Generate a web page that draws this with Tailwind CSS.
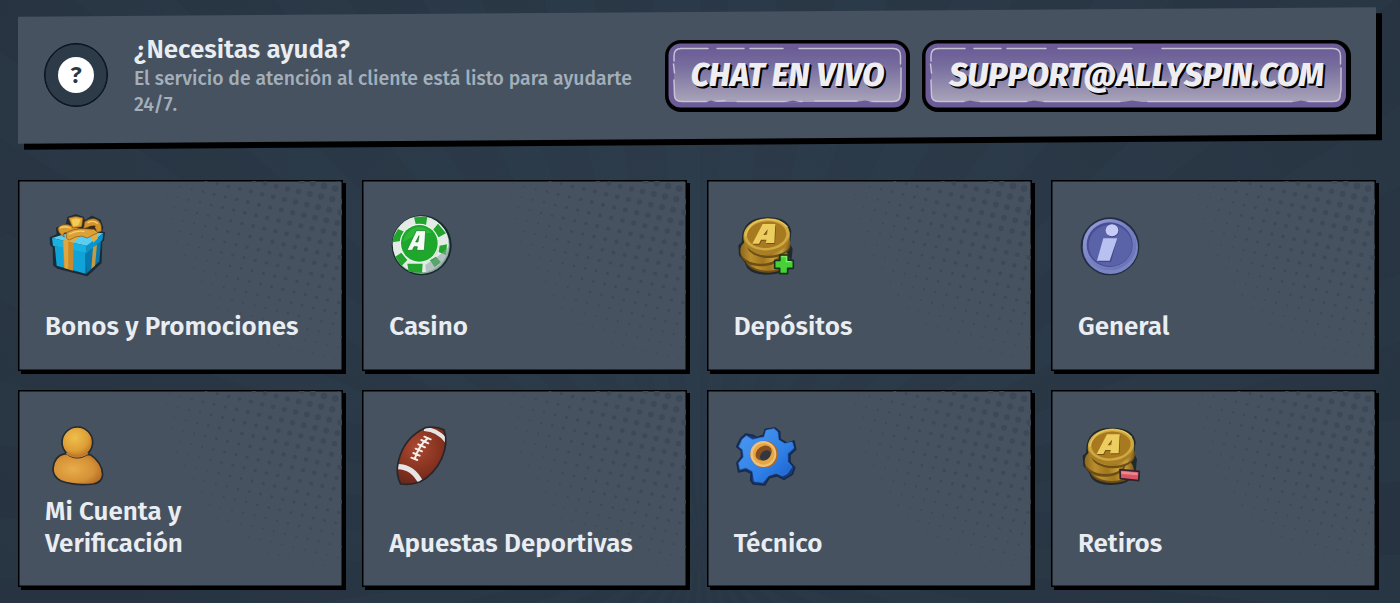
<!DOCTYPE html>
<html lang="es">
<head>
<meta charset="utf-8">
<title>Centro de ayuda</title>
<script src="https://cdn.jsdelivr.net/npm/@tailwindcss/browser@4"></script>
</head>
<body class="h-[603px] overflow-hidden bg-[#293544] font-['Fira_Sans','Noto_Sans',sans-serif] text-[#e9edf2]">
<div class="relative isolate h-[603px] overflow-hidden">
  <!-- faint sunburst -->
  <div class="absolute inset-0 -z-10 bg-[radial-gradient(ellipse_60%_90%_at_50%_40%,#2c3b4a,#273341)]"></div>
  <div class="absolute inset-0 -z-10 bg-[repeating-conic-gradient(from_3deg_at_50%_90%,rgba(60,85,105,0.07)_0deg_5deg,transparent_5deg_11deg)]"></div>

  <header class="relative isolate mx-[18px] mt-3 mr-6 flex h-[127px] items-start">
    <div class="absolute inset-0 -z-10 skew-y-[-0.4deg] bg-[#46525f] shadow-[6px_6px_0_#000]"></div>
    <div class="mt-[31px] ml-[26px] flex size-16 shrink-0 items-center justify-center rounded-full border border-[#06111b] bg-[#2d3a48] shadow-[inset_0_0_0_0.5px_#06111b]">
      <div class="flex size-9 items-center justify-center rounded-full bg-white text-[24px] leading-none font-semibold text-[#2b3846]">?</div>
    </div>
    <div class="mt-[22px] ml-[26px] w-[531px]">
      <h1 class="text-[26px] leading-8 font-semibold whitespace-nowrap">¿Necesitas ayuda?</h1>
      <p class="text-[19.4px] leading-[26px] font-medium whitespace-nowrap text-[#a3afbb]">El servicio de atención al cliente está listo para ayudarte<br>24/7.</p>
    </div>
    <div class="mt-[28px] flex gap-[12px]">
      <a class="relative isolate flex h-[72px] w-[245px] items-center justify-center rounded-[16px] bg-black">
        <svg class="absolute inset-0 -z-10" width="245" height="72" viewBox="0 0 245 72">
          <defs><linearGradient id="bg" x1="0" y1="0" x2="0" y2="1"><stop offset="0" stop-color="#6b5c96"/><stop offset=".3" stop-color="#766b9d"/><stop offset="1" stop-color="#a9a4b9"/></linearGradient></defs>
          <rect x="3.5" y="3.500" width="237.500" height="64" rx="12" fill="#6b5c98"/>
          <rect x="9" y="8.500" width="227" height="53.500" rx="6" fill="url(#bg)"/>
          <g fill="none" stroke="#c6c1d3" stroke-width="1.5" stroke-linecap="round">
            <path d="M16 8.600H43M52 8.600H79M85 8.600H118M134 8.600H228Q235.500 8.600 235.500 16V24M236 28V50L235 55Q235 61.500 228 61.500H205"/>
            <path d="M192 61H150M137 61.500H72M60 60.500L48 61.500M42 61.500H17Q9.500 61.500 9.500 55L9 40M9.500 33L8.500 24M9 21V16Q9 8.600 16 8.600"/>
          </g>
          <path d="M118 62.500l10-2 9 2zM188 62.500l12-2 10 2zM40 62.500l6-2 8 2z" fill="#6b5c98"/>
        </svg>
        <span class="text-[32.4px] leading-none font-extrabold italic whitespace-nowrap text-[#eeedf2] [text-shadow:1px_1px_0_#000,2px_2px_0_#000]">CHAT EN VIVO</span>
      </a>
      <a class="relative isolate flex h-[72px] w-[429px] items-center justify-center rounded-[16px] bg-black">
        <svg class="absolute inset-0 -z-10" width="429" height="72" viewBox="0 0 429 72">
          <rect x="3.5" y="3.500" width="420.500" height="64" rx="12" fill="#6b5c98"/>
          <rect x="9" y="8.500" width="410" height="53.500" rx="6" fill="url(#bg)"/>
          <g fill="none" stroke="#c6c1d3" stroke-width="1.5" stroke-linecap="round">
            <path d="M16 8.600H43M52 8.600H79M85 8.600H124M136 8.600H210M240 8.600H411Q418.500 8.600 418.500 16V24M419 28V50L418 55Q418 61.500 411 61.500H385"/>
            <path d="M370 61.500H226M198 61.500H122M105 61.500H58M42 61.500H17Q9.500 61.500 9.500 55L9 40M9.500 33L8.500 24M9 21V16Q9 8.600 16 8.600"/>
          </g>
          <path d="M198 62.500l12-2 14 2zM370 62.500l9-2 10 2zM40 62.500l8-2 10 2zM102 62.500l10-2 12 2z" fill="#6b5c98"/>
        </svg>
        <span class="text-[32.4px] leading-none font-extrabold italic whitespace-nowrap text-[#eeedf2] [text-shadow:1px_1px_0_#000,2px_2px_0_#000]">SUPPORT@ALLYSPIN.COM</span>
      </a>
    </div>
  </header>

  <main class="mx-[18px] mt-[41px] mr-6 grid grid-cols-4 grid-rows-[191px_197px] gap-x-[19.3px] gap-y-[19px]">
    <section class="card relative isolate flex flex-col justify-between border border-black bg-[#46525f] pt-[33px] pb-[27px] pl-[26px] shadow-[inset_0_0_0_0.5px_#000,3px_3px_0_#000]">
      <svg class="size-16 shrink-0" viewBox="13 26 192 192">
        <path d="M29 97L50 88 48 68 78 56 82 36 105 29 128 36 131 48 154 33 178 44 186 66 182 80 191 82 188 105 183 107 181 172 139 211 50 188 39 180 38 126 30 118Z" fill="#1b2c38" stroke="#1b2c38" stroke-width="4" stroke-linejoin="round"/>
        <path d="M42 122L135 138V205L48 181Z" fill="#0fa3d8"/><path d="M135 138L181 108 176 168 137 205Z" fill="#067aae"/>
        <path d="M34 98L100 78 188 84 139 122Z" fill="#5acdf0"/><path d="M34 98L138 121V142L37 121Z" fill="#18b2e2"/><path d="M138 121L188 85 185 105 138 142Z" fill="#0894cc"/>
        <path d="M66 105L99 112 97 196 70 188Z" fill="#c98a2a"/><path d="M68 105L83 108 83 190 72 188Z" fill="#e0a640"/>
        <path d="M66 104L104 84 124 88 98 112ZM148 88L170 86 172 99 158 112Z" fill="#e0ad42"/><path d="M157 126L169 118 163 181 152 190Z" fill="#c69a42"/>
        <path d="M52 68Q61 55 82 58L119 71 110 91 77 82Q64 81 71 95Q51 83 52 68Z" fill="#d89b2f" stroke="#805014" stroke-width="2"/>
        <path d="M132 49Q154 34 170 44Q185 53 182 78L166 82Q170 65 151 62L129 70Z" fill="#d3942b" stroke="#805014" stroke-width="2"/>
        <path d="M84 38Q105 29 127 38L123 64 96 68Z" fill="#e0a42f" stroke="#805014" stroke-width="2"/><path d="M92 43Q108 36 120 43L113 60 98 63Z" fill="#f5cb58"/>
        <path d="M139 70Q157 56 165 62L158 75 141 77Z" fill="#3d2a14"/>
        <path d="M77 82Q99 70 120 70Q137 70 160 72L172 82Q158 88 140 98Q123 88 104 95L86 104Q75 104 77 82Z" fill="#dda136" stroke="#805014" stroke-width="2"/>
        <path d="M86 86Q107 75 130 78M60 67Q72 61 88 68M142 52Q158 43 170 54" fill="none" stroke="#f5cf78" stroke-width="4" stroke-linecap="round"/>
      </svg>
      <h2 class="text-[26px] leading-8 font-semibold whitespace-nowrap">Bonos y Promociones</h2>
    </section>

    <section class="card relative isolate flex flex-col justify-between border border-black bg-[#46525f] pt-[33px] pb-[27px] pl-[26px] shadow-[inset_0_0_0_0.5px_#000,3px_3px_0_#000]">
      <svg class="size-16 shrink-0" viewBox="29 27 192 192">
        <ellipse cx="127" cy="121" rx="90" ry="90" fill="#142b2c"/>
        <ellipse cx="126" cy="122" rx="85" ry="85" fill="#8fa3a0"/>
        <circle cx="124" cy="118" r="69" fill="none" stroke="#e4ebe6" stroke-width="30"/>
        <path d="M104 37L144 35 140 60 110 61ZM176 56L200 85 178 97 160 76ZM203 118L200 150 178 141 181 122ZM166 187L185 172 170 155 152 166ZM84 176L88 200 128 204 130 176ZM48 155L66 184 84 165 66 143ZM39 112L42 96 56 72 78 82 64 108Z" fill="#22a52d"/>
        <path d="M208 125Q205 172 170 192L140 202 138 180 184 148Z" fill="#8ba2a2" opacity=".55"/>
        <circle cx="120" cy="115" r="59" fill="#e9f4ea"/><circle cx="120" cy="115" r="55" fill="#1da72b"/>
        <path d="M71 112A50 50 0 0 1 158 83Q112 83 71 112Z" fill="#3cc244" opacity=".6"/>
        <path d="M83 136L111 77H139L135 136H112L114 125H104L99 136ZM109 111H116L119 92Z" fill="#f4fbf2" stroke="#147522" stroke-width="2" fill-rule="evenodd"/>
      </svg>
      <h2 class="text-[26px] leading-8 font-semibold whitespace-nowrap">Casino</h2>
    </section>

    <section class="card relative isolate flex flex-col justify-between border border-black bg-[#46525f] pt-[33px] pb-[27px] pl-[26px] shadow-[inset_0_0_0_0.5px_#000,3px_3px_0_#000]">
      <svg class="size-16 shrink-0" viewBox="27 27 192 192">
        <defs>
          <linearGradient id="gold" x1="0" y1="0" x2="1" y2="0"><stop offset="0" stop-color="#8e681b"/><stop offset=".25" stop-color="#b98f2e"/><stop offset=".55" stop-color="#a0761f"/><stop offset=".8" stop-color="#c7a03a"/><stop offset="1" stop-color="#7c5a18"/></linearGradient>
          <g id="coins">
            <path d="M52 88Q62 36 129 37Q190 36 199 79L195 116 203 132 198 177Q178 210 121 209Q67 207 60 173L42 151 40 121 50 112Z" fill="#202a2d"/>
            <ellipse cx="128" cy="166" rx="66" ry="37" fill="#6f4e15"/><ellipse cx="128" cy="160" rx="65" ry="37" fill="url(#gold)"/>
            <ellipse cx="108" cy="144" rx="62" ry="40" fill="#6f4e15"/><ellipse cx="108" cy="136" rx="62" ry="40" fill="url(#gold)"/>
            <ellipse cx="131" cy="121" rx="65" ry="38" fill="#6f4e15"/><ellipse cx="131" cy="114" rx="65" ry="38" fill="url(#gold)"/>
            <ellipse cx="125" cy="96" rx="70" ry="52" fill="#a87f25" transform="rotate(-5 125 96)"/>
            <ellipse cx="125" cy="88" rx="69" ry="48" fill="#cfa840" transform="rotate(-5 125 88)"/>
            <ellipse cx="125" cy="89" rx="59" ry="40" fill="#a87a20" transform="rotate(-5 125 89)"/>
            <path d="M61 93Q72 47 124 43Q167 42 187 66" fill="none" stroke="#e6c860" stroke-width="4"/>
            <path d="M82 116L113 59H151L148 114H123L124 104H108L102 116ZM115 90H126L128 73Z" fill="#765012" fill-rule="evenodd" transform="translate(2 3)"/>
            <path d="M82 116L113 57H151L148 114H123L124 104H108L102 116ZM115 90H126L128 73Z" fill="#eccd60" fill-rule="evenodd"/>
          </g>
        </defs>
        <use href="#coins"/>
        <path d="M164 150H190V166H205V190H188V206H164V190H149V166H165Z" fill="#46d237" stroke="#17331e" stroke-width="5" stroke-linejoin="round"/>
        <path d="M169 155H184V170H199" fill="none" stroke="#7bee62" stroke-width="4"/>
      </svg>
      <h2 class="text-[26px] leading-8 font-semibold whitespace-nowrap">Depósitos</h2>
    </section>

    <section class="card relative isolate flex flex-col justify-between border border-black bg-[#46525f] pt-[33px] pb-[27px] pl-[26px] shadow-[inset_0_0_0_0.5px_#000,3px_3px_0_#000]">
      <svg class="size-16 shrink-0" viewBox="24 27 192 192">
        <defs><linearGradient id="blu" x1="0" y1="0" x2="1" y2="1"><stop offset="0" stop-color="#9aa4de"/><stop offset=".5" stop-color="#7680c2"/><stop offset="1" stop-color="#6870b5"/></linearGradient></defs>
        <ellipse cx="120" cy="124" rx="88" ry="87" fill="#232d42"/>
        <ellipse cx="121" cy="126" rx="83" ry="81" fill="#7c85c4"/>
        <ellipse cx="119" cy="119" rx="80" ry="77" fill="url(#blu)"/>
        <ellipse cx="119" cy="119" rx="69" ry="67" fill="#474e93"/>
        <ellipse cx="121" cy="121" rx="65" ry="62" fill="#5a62a8"/>
        <path d="M109 77Q110 60 128 59Q144 60 143 76Q140 92 124 94Q108 93 109 77ZM102 101L138 97 119 168 80 168Z" fill="#434984" transform="translate(4 3)"/>
        <ellipse cx="126" cy="76" rx="19" ry="18" fill="#c6ccf7"/><path d="M100 100H142L119 167H81Z" fill="#b9c1f1"/>
      </svg>
      <h2 class="text-[26px] leading-8 font-semibold whitespace-nowrap">General</h2>
    </section>

    <section class="card relative isolate flex flex-col justify-between border border-black bg-[#46525f] pt-[33px] pb-[26px] pl-[26px] shadow-[inset_0_0_0_0.5px_#000,3px_3px_0_#000]">
      <svg class="size-16 shrink-0" viewBox="15 24 192 192">
        <defs><radialGradient id="head" cx=".42" cy=".35" r=".7"><stop offset="0" stop-color="#efbf4c"/><stop offset=".6" stop-color="#dd9f36"/><stop offset="1" stop-color="#b56c22"/></radialGradient>
        <radialGradient id="body" cx=".4" cy=".5" r=".7"><stop offset="0" stop-color="#e8ad4a"/><stop offset=".6" stop-color="#d59136"/><stop offset="1" stop-color="#a96123"/></radialGradient></defs>
        <path d="M74 113Q42 121 39 157Q38 182 62 194Q104 210 160 204Q186 200 188 176Q186 139 151 116Z" fill="url(#body)" stroke="#252a30" stroke-width="5"/>
        <circle cx="112" cy="79" r="46" fill="url(#head)" stroke="#252a30" stroke-width="5"/>
        <path d="M77 113Q111 137 146 113L140 108Q110 126 83 108Z" fill="#c07c2c"/>
      </svg>
      <h2 class="text-[26px] leading-8 font-semibold whitespace-nowrap">Mi Cuenta y<br>Verificación</h2>
    </section>

    <section class="card relative isolate flex flex-col justify-between border border-black bg-[#46525f] pt-[33px] pb-[26px] pl-[26px] shadow-[inset_0_0_0_0.5px_#000,3px_3px_0_#000]">
      <svg class="size-16 shrink-0" viewBox="13 26 192 192">
        <defs><radialGradient id="ball" cx=".4" cy=".4" r=".6"><stop offset="0" stop-color="#a94a33"/><stop offset=".5" stop-color="#86321f"/><stop offset="1" stop-color="#54201a"/></radialGradient>
        <clipPath id="bc"><path d="M122 37Q153 31 178 43Q192 82 171 130Q147 180 105 200Q78 210 48 206Q32 177 41 138Q58 67 122 37Z"/></clipPath></defs>
        <g clip-path="url(#bc)"><rect width="240" height="240" fill="url(#ball)"/>
          <path d="M38 154Q83 153 108 201" fill="none" stroke="#e6e4e4" stroke-width="16"/><path d="M118 41Q161 43 188 80" fill="none" stroke="#e6e4e4" stroke-width="12"/></g>
        <path d="M122 37Q153 31 178 43Q192 82 171 130Q147 180 105 200Q78 210 48 206Q32 177 41 138Q58 67 122 37Z" fill="none" stroke="#27262b" stroke-width="5"/>
        <path d="M129 69Q104 88 90 131M119 64L138 72M110 74L131 84M101 87L121 96M93 100L112 108M86 113L105 121M80 127L98 134" fill="none" stroke="#f5eee8" stroke-width="6" stroke-linecap="round"/>
      </svg>
      <h2 class="text-[26px] leading-8 font-semibold whitespace-nowrap">Apuestas Deportivas</h2>
    </section>

    <section class="card relative isolate flex flex-col justify-between border border-black bg-[#46525f] pt-[33px] pb-[26px] pl-[26px] shadow-[inset_0_0_0_0.5px_#000,3px_3px_0_#000]">
      <svg class="size-16 shrink-0" viewBox="28 26 192 192">
        <defs><linearGradient id="gear" x1="0" y1="0" x2="1" y2="1"><stop offset="0" stop-color="#4e9af0"/><stop offset=".6" stop-color="#2f80e8"/><stop offset="1" stop-color="#195bc8"/></linearGradient></defs>
        <path d="M122 42L151 38 165 50 166 72 187 84 208 77 213 102 196 118 196 141 210 157 203 177 178 192 158 181 134 187 120 209 86 206 78 195 80 174 61 165 42 170 37 143 51 124 50 105 36 94 48 70 63 56 87 61 95 67 116 60Z" fill="#173b80" stroke="#162a4b" stroke-width="5" stroke-linejoin="round"/>
        <path d="M124 45L148 40 159 50 161 73 180 85 202 80 207 98 188 115 188 138 202 154 187 175 173 181 154 173 131 181 115 201 89 198 84 168 64 157 46 162 42 143 57 125 54 103 43 94 53 72 65 62 84 73 103 68 118 66Z" fill="url(#gear)" stroke="#3985dd" stroke-width="2" stroke-linejoin="round"/>
        <ellipse cx="119" cy="117" rx="42" ry="41" fill="#a96a24"/><ellipse cx="116" cy="116" rx="39" ry="39" fill="#eec078"/><ellipse cx="117" cy="116" rx="32" ry="32" fill="#e5a646"/>
        <ellipse cx="117" cy="113" rx="26" ry="20" fill="#8a4f1c" transform="rotate(-35 117 113)"/>
        <ellipse cx="122" cy="120" rx="18" ry="13" fill="#303740" transform="rotate(-40 122 120)"/>
      </svg>
      <h2 class="text-[26px] leading-8 font-semibold whitespace-nowrap">Técnico</h2>
    </section>

    <section class="card relative isolate flex flex-col justify-between border border-black bg-[#46525f] pt-[33px] pb-[26px] pl-[26px] shadow-[inset_0_0_0_0.5px_#000,3px_3px_0_#000]">
      <svg class="size-16 shrink-0 overflow-visible" viewBox="26 26 192 192">
        <use href="#coins"/>
        <path d="M152 163L210 168 208 196 153 190Z" fill="#d95564" stroke="#322329" stroke-width="5" stroke-linejoin="round"/><path d="M156 168L205 172V180L156 176Z" fill="#ec8690"/>
      </svg>
      <h2 class="text-[26px] leading-8 font-semibold whitespace-nowrap">Retiros</h2>
    </section>
  </main>
</div>
<script>
  // Halftone dots: a tilted grid that shrinks away from each card's top right corner.
  const W = 323, H = 195;
  let dots = '';
  for (let i = -30; i < 30; i++) for (let j = -30; j < 30; j++) {
    const x = W - 18 + i * 11.2 - j * 3, y = 5 + i * 2.6 + j * 10.6;
    const d = Math.hypot(W - x, y);
    if (x > W + 3 || y < -3 || y > H || d > 178) continue;
    dots += `<circle cx="${x.toFixed(1)}" cy="${y.toFixed(1)}" r="${(3.5 * (1 - d / 215)).toFixed(2)}"/>`;
  }
  document.querySelectorAll('.card').forEach(card => {
    card.insertAdjacentHTML('beforeend', `<svg class="absolute inset-0 -z-10 h-full w-full" fill="#3d4956">${dots}</svg>`);
  });
</script>
</body>
</html>
